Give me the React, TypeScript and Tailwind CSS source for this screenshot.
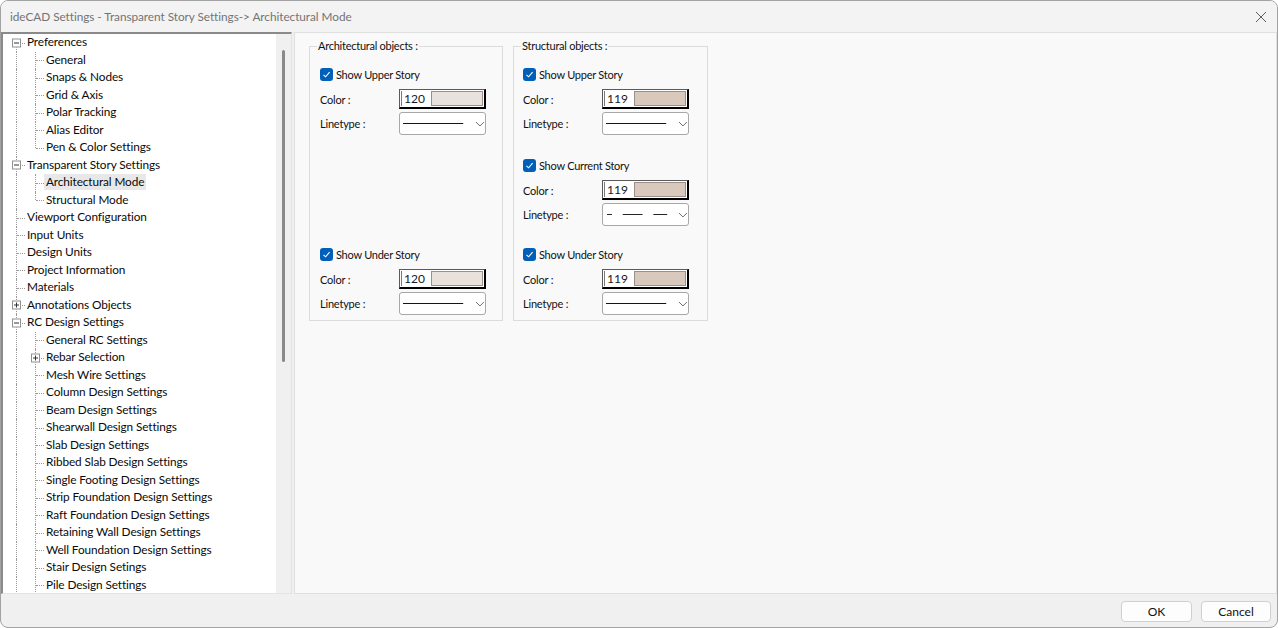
import React from 'react';

type Item = { t: string; d: 1 | 2; box?: '+' | '-'; first?: boolean; last?: boolean; sel?: boolean };

const tree: Item[] = [
  { t: 'Preferences', d: 1, box: '-', first: true },
  { t: 'General', d: 2 },
  { t: 'Snaps & Nodes', d: 2 },
  { t: 'Grid & Axis', d: 2 },
  { t: 'Polar Tracking', d: 2 },
  { t: 'Alias Editor', d: 2 },
  { t: 'Pen & Color Settings', d: 2, last: true },
  { t: 'Transparent Story Settings', d: 1, box: '-' },
  { t: 'Architectural Mode', d: 2, sel: true },
  { t: 'Structural Mode', d: 2, last: true },
  { t: 'Viewport Configuration', d: 1 },
  { t: 'Input Units', d: 1 },
  { t: 'Design Units', d: 1 },
  { t: 'Project Information', d: 1 },
  { t: 'Materials', d: 1 },
  { t: 'Annotations Objects', d: 1, box: '+' },
  { t: 'RC Design Settings', d: 1, box: '-' },
  { t: 'General RC Settings', d: 2 },
  { t: 'Rebar Selection', d: 2, box: '+' },
  { t: 'Mesh Wire Settings', d: 2 },
  { t: 'Column Design Settings', d: 2 },
  { t: 'Beam Design Settings', d: 2 },
  { t: 'Shearwall Design Settings', d: 2 },
  { t: 'Slab Design Settings', d: 2 },
  { t: 'Ribbed Slab Design Settings', d: 2 },
  { t: 'Single Footing Design Settings', d: 2 },
  { t: 'Strip Foundation Design Settings', d: 2 },
  { t: 'Raft Foundation Design Settings', d: 2 },
  { t: 'Retaining Wall Design Settings', d: 2 },
  { t: 'Well Foundation Design Settings', d: 2 },
  { t: 'Stair Design Setings', d: 2 },
  { t: 'Pile Design Settings', d: 2 },
];

function ExpandBox({ kind, left }: { kind: '+' | '-'; left: string }) {
  return (
    <span
      className={`absolute top-1/2 -translate-y-1/2 w-[9px] h-[9px] bg-white border border-[#919191] ${left}`}
    >
      <span className="absolute left-[1px] right-[1px] top-[3px] h-px bg-[#333]" />
      {kind === '+' && <span className="absolute top-[1px] bottom-[1px] left-[3px] w-px bg-[#333]" />}
    </span>
  );
}

function TreeRow({ it }: { it: Item }) {
  return (
    <div className="relative h-[17.5px] flex items-center">
      <span
        className={`absolute left-[13px] w-0 border-l border-dotted border-[#9a9a9a] bottom-0 ${
          it.first ? 'top-1/2' : 'top-0'
        }`}
      />
      {it.d === 1 && (
        <span className="absolute left-[14px] w-[8px] top-1/2 h-0 border-t border-dotted border-[#9a9a9a]" />
      )}
      {it.d === 1 && it.box && <ExpandBox kind={it.box} left="left-[9px]" />}
      {it.d === 2 && (
        <>
          <span
            className={`absolute left-[32px] w-0 border-l border-dotted border-[#9a9a9a] top-0 ${
              it.last ? 'h-1/2' : 'bottom-0'
            }`}
          />
          <span className="absolute left-[33px] w-[8px] top-1/2 h-0 border-t border-dotted border-[#9a9a9a]" />
          {it.box && <ExpandBox kind={it.box} left="left-[28px]" />}
        </>
      )}
      <span
        className={`relative -top-[0.5px] whitespace-nowrap px-[2px] leading-[16px] text-[11.8px] tracking-[-0.1px] text-[#0a0a0a] ${
          it.d === 1 ? 'ml-[22px]' : 'ml-[41px]'
        } ${it.sel ? 'bg-[#e8e8e8]' : ''}`}
      >
        {it.t}
      </span>
    </div>
  );
}

function Check() {
  return (
    <span className="w-[13px] h-[13px] rounded-[3px] bg-[#005fb8] flex items-center justify-center shrink-0">
      <svg width="9" height="9" viewBox="0 0 9 9">
        <path d="M1.5 4.8 L3.6 6.8 L7.6 2.2" fill="none" stroke="white" strokeWidth="1.1" />
      </svg>
    </span>
  );
}

function ColorField({ value, color }: { value: string; color: string }) {
  return (
    <div className="w-[87px] h-[20px] border-t border-l border-[#5a5a5a] border-r-2 border-b-2 border-r-black border-b-black bg-white flex p-[1px]">
      <div className="w-[30px] h-full border-l border-[#7a7a7a] flex items-center pl-[2px] text-[12px] text-[#1a1a1a] leading-none">
        {value}
      </div>
      <div className="flex-1 h-full border border-[#9a8f8a]" style={{ backgroundColor: color }} />
    </div>
  );
}

function LineDrop({ dashed }: { dashed?: boolean }) {
  return (
    <div className="w-[87px] h-[23px] border border-[#a8a8a8] rounded-[3px] bg-white flex items-center">
      <svg width="66" height="3" viewBox="0 0 66 3" className="ml-[3px]">
        {dashed ? (
          <g stroke="#222" strokeWidth="1">
            <line x1="1" y1="1.5" x2="6" y2="1.5" />
            <line x1="17" y1="1.5" x2="37" y2="1.5" />
            <line x1="48" y1="1.5" x2="62" y2="1.5" />
          </g>
        ) : (
          <line x1="0" y1="1.5" x2="61" y2="1.5" stroke="#111" strokeWidth="1" />
        )}
      </svg>
      <svg width="10" height="6" viewBox="0 0 10 6" className="ml-[7px]">
        <path d="M1 1 L5 5 L9 1" fill="none" stroke="#6a6a6a" strokeWidth="1" />
      </svg>
    </div>
  );
}

function Section({ label, value, color, dashed, className = '' }: { label: string; value: string; color: string; dashed?: boolean; className?: string }) {
  return (
    <div className={`flex flex-col ${className}`}>
      <div className="flex items-center h-[14px] gap-[3px]">
        <Check />
        <span className="text-[11px] tracking-[-0.25px] text-[#111] whitespace-nowrap leading-none">{label}</span>
      </div>
      <div className="flex items-center h-[20px] mt-[8px]">
        <span className="w-[79px] text-[11px] tracking-[-0.2px] text-[#111] leading-none">Color :</span>
        <ColorField value={value} color={color} />
      </div>
      <div className="flex items-center h-[23px] mt-[3px]">
        <span className="w-[79px] text-[11px] tracking-[-0.2px] text-[#111] leading-none">Linetype :</span>
        <LineDrop dashed={dashed} />
      </div>
    </div>
  );
}

function Group({ title, width, children }: { title: string; width: string; children: React.ReactNode }) {
  return (
    <div className={`relative ${width} h-[275px] border border-[#dcdcdc] pl-[10px]`}>
      <span className="absolute left-[7px] -top-[8px] px-[1px] bg-[#f9f9f9] text-[11px] tracking-[-0.25px] leading-[14px] text-[#111] whitespace-nowrap">
        {title}
      </span>
      {children}
    </div>
  );
}

export default function App() {
  const A = '#e9e1dc';
  const S = '#d9c9bd';
  return (
    <div
      className="w-[1278px] h-[628px] bg-[#f0f0f0] border border-[#a3a3a3] rounded-[8px] overflow-hidden flex flex-col"
      style={{ fontFamily: 'Lato, "Noto Sans", sans-serif' }}
    >
      <div className="h-[31px] shrink-0 flex items-center justify-between bg-[#f3f3f3]">
        <span className="ml-[9px] text-[11.8px] tracking-[-0.05px] text-[#737373] whitespace-nowrap">
          ideCAD Settings - Transparent Story Settings-&gt; Architectural Mode
        </span>
        <svg width="12" height="12" viewBox="0 0 12 12" className="mr-[10px]">
          <path d="M1 1 L11 11 M11 1 L1 11" stroke="#5c5c5c" strokeWidth="1" />
        </svg>
      </div>

      <div className="h-[562px] shrink-0 flex gap-[2px]">
        <div className="w-[291px] h-full flex border-t-2 border-l-2 border-t-[#8a8a8a] border-l-[#8a8a8a] border-r border-b border-r-[#e3e3e3] border-b-[#e3e3e3]">
          <div className="flex-1 bg-white overflow-hidden">
            {tree.map((it) => (
              <TreeRow key={it.t} it={it} />
            ))}
          </div>
          <div className="w-[15px] bg-[#f0f0f0] flex justify-center pt-[16px]">
            <div className="w-[3px] h-[312px] rounded-full bg-[#8a8a8a]" />
          </div>
        </div>

        <div className="flex-1 h-full bg-[#f9f9f9] border border-[#e0e0e0] pl-[14px] pt-[13px] flex gap-[10px] items-start">
          <Group title="Architectural objects :" width="w-[194px]">
            <Section className="mt-[20px]" label="Show Upper Story" value="120" color={A} />
            <Section className="mt-[112px]" label="Show Under Story" value="120" color={A} />
          </Group>
          <Group title="Structural objects :" width="w-[195px]">
            <div className="-ml-[1px]">
              <Section className="mt-[20px]" label="Show Upper Story" value="119" color={S} />
              <Section className="mt-[23px]" label="Show Current Story" value="119" color={S} dashed />
              <Section className="mt-[21px]" label="Show Under Story" value="119" color={S} />
            </div>
          </Group>
        </div>
      </div>

      <div className="flex-1 flex justify-end items-start pt-[7px] pr-[6px] gap-[9px]">
        <button className="w-[71px] h-[21px] rounded-[4px] border border-[#d0d0d0] bg-[#fdfdfd] text-[12px] text-[#111] leading-none">
          OK
        </button>
        <button className="w-[70px] h-[21px] rounded-[4px] border border-[#d0d0d0] bg-[#fdfdfd] text-[12px] text-[#111] leading-none">
          Cancel
        </button>
      </div>
    </div>
  );
}
